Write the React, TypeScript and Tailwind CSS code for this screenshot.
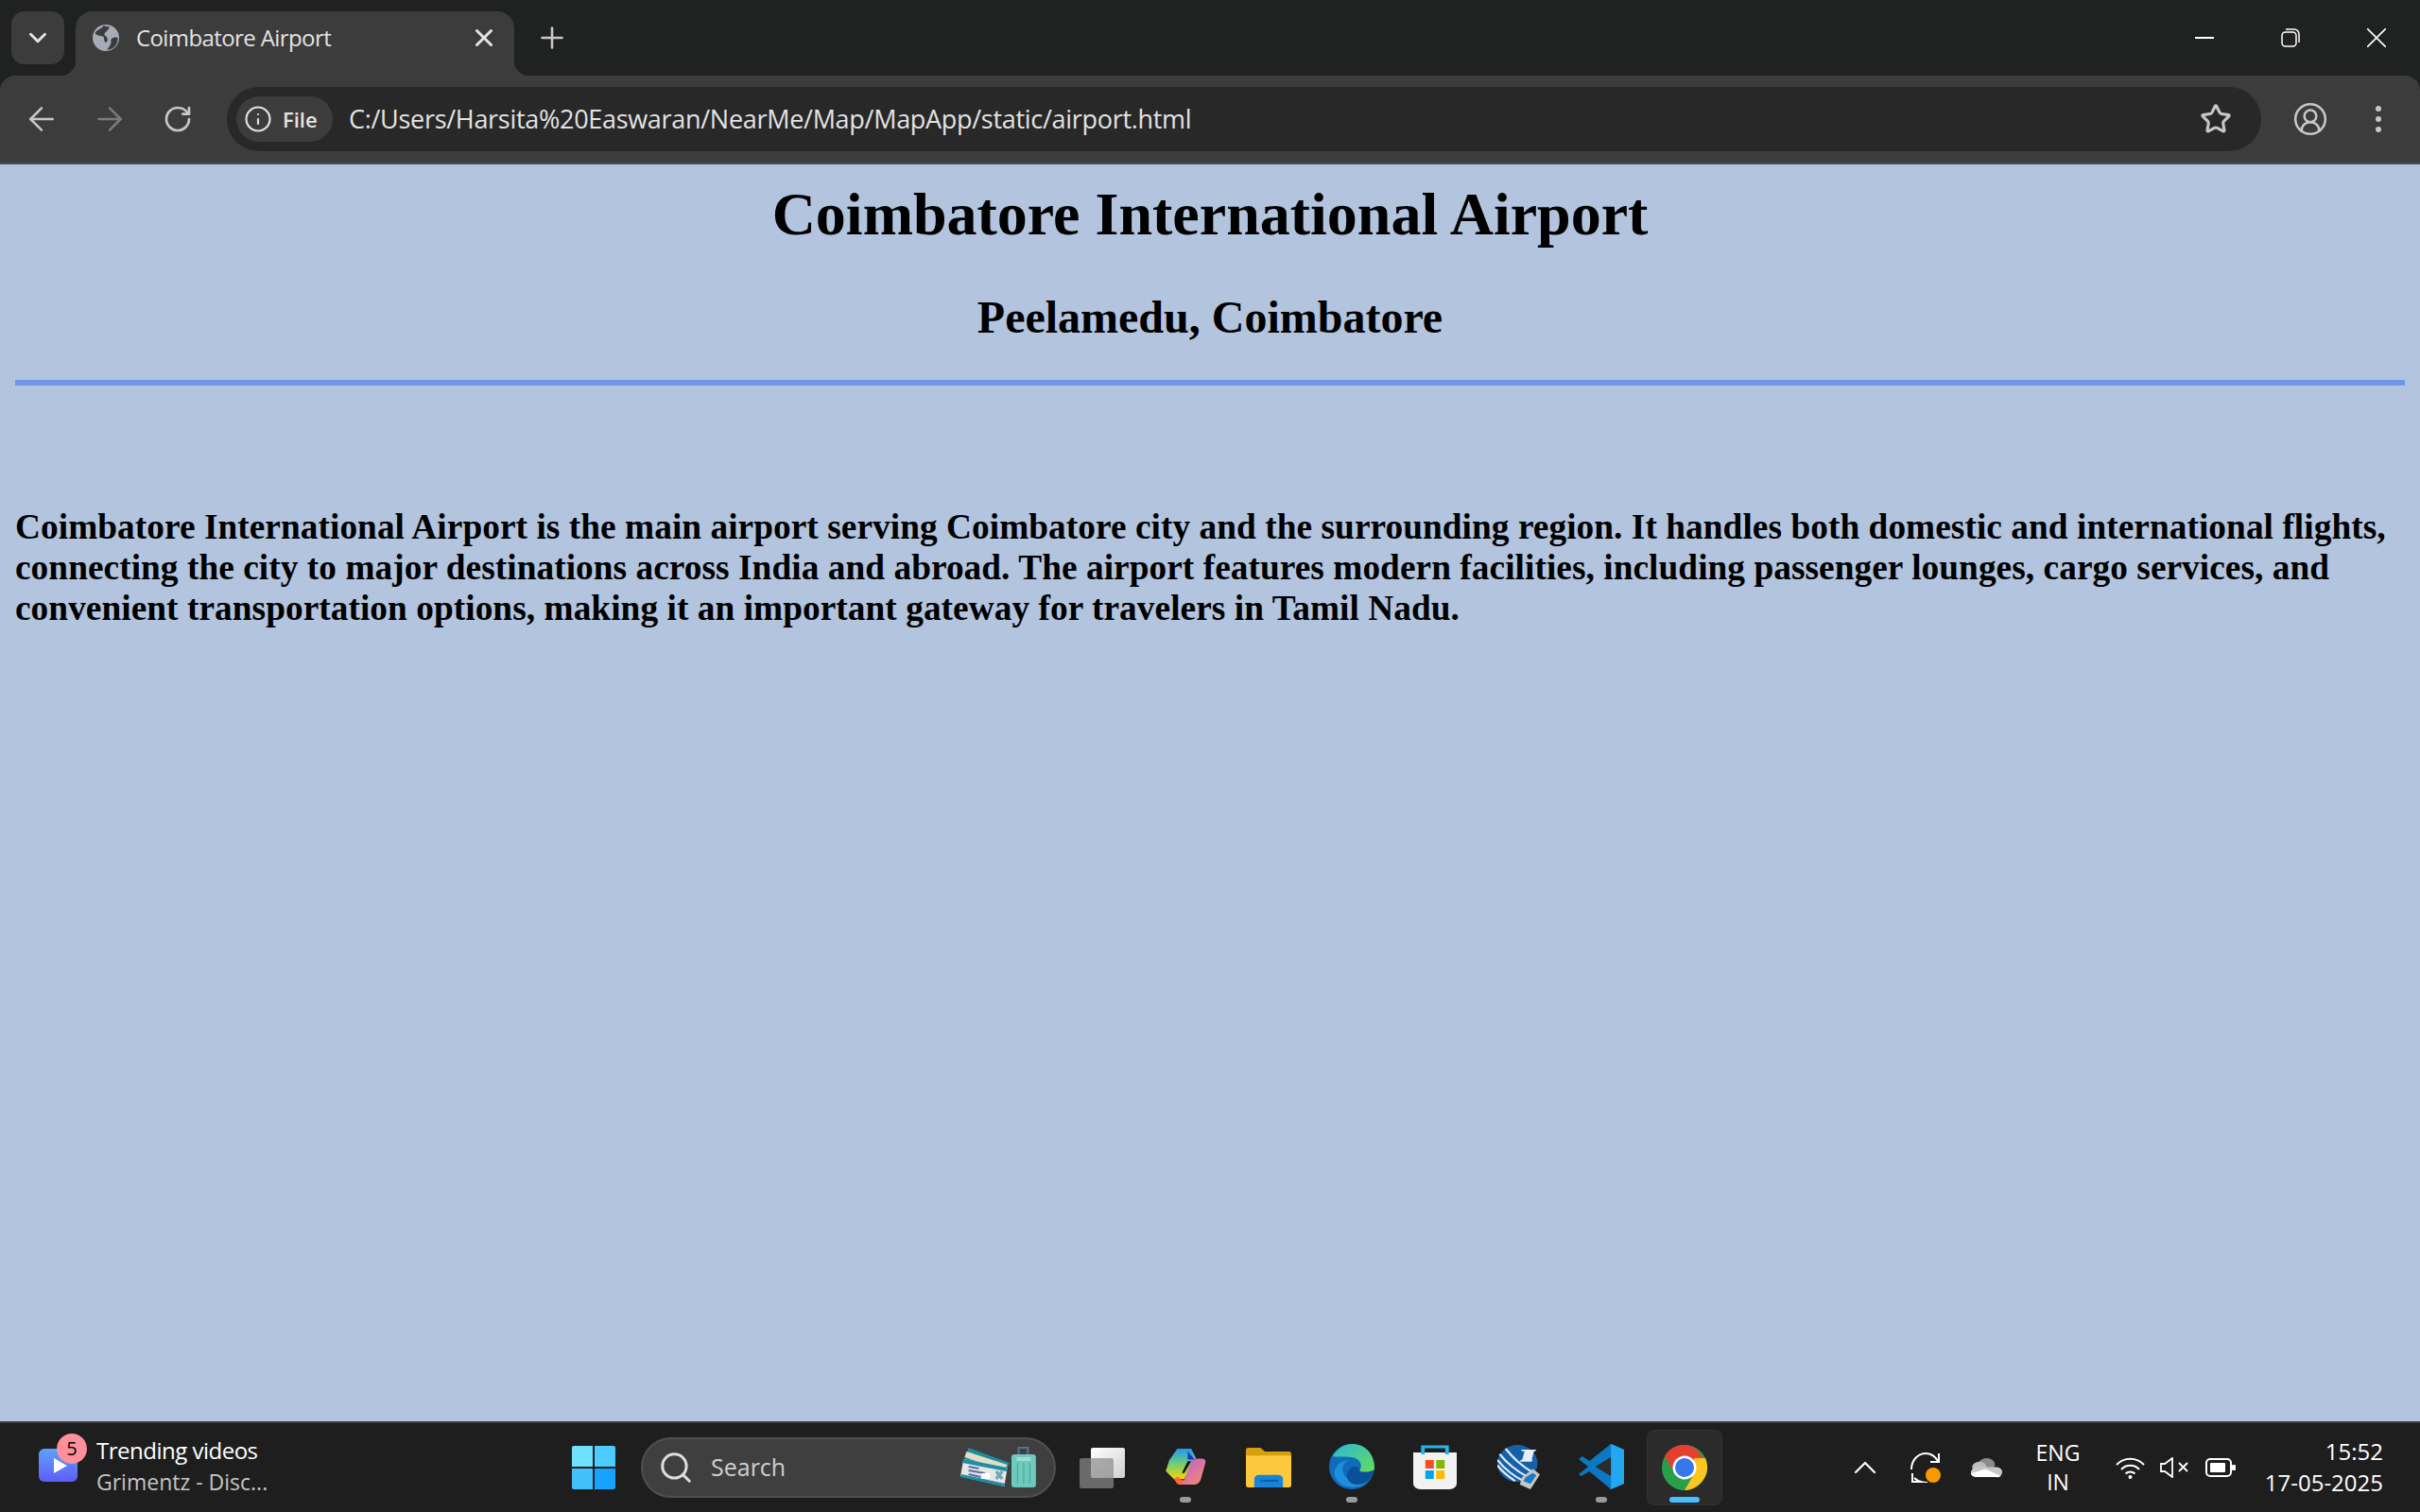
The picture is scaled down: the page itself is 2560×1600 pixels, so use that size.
import type { ReactNode } from "react";
import { ChevronDown, X, Plus, ArrowLeft, ArrowRight, RotateCw, Info, Star, CircleUserRound, Search, ChevronUp } from "lucide-react";

const SANS = "font-['Open_Sans','Noto_Sans',sans-serif]";

function Globe() {
  return (
    <svg width="28" height="28" viewBox="0 0 22 22">
      <circle cx="11" cy="11" r="11" fill="#a6acb5" />
      <path d="M9 1C7 4 4 4 2 7c2 3 5 2 7 3 1 2 0 4 2 5 3-2 1-5-1-6-1-3 3-3 4-7z" fill="#3c3c3c" />
      <path d="M21 11c-3-1-5 0-6 2 1 3-1 5-3 8 5 0 9-4 9-10z" fill="#3c3c3c" />
    </svg>
  );
}

function WinLogo() {
  return (
    <div className="grid h-[46px] w-[46px] grid-cols-2 gap-[2px]">
      <div className="rounded-tl-[2px] bg-[#6fe0ff]" />
      <div className="rounded-tr-[2px] bg-[#4ecbff]" />
      <div className="rounded-bl-[2px] bg-[#41c0fb]" />
      <div className="rounded-br-[2px] bg-[#17a3fd]" />
    </div>
  );
}

function Tickets() {
  return (
    <svg width="82" height="46" viewBox="0 0 76 46" preserveAspectRatio="none">
      <path d="M8 2l40 16-4 10L4 14z" fill="#1c8e9e" />
      <path d="M6 6l40 14-3 6L4 12z" fill="#e5dcc8" />
      <path d="M3 14l43 9-3 20L0 32z" fill="#e8e6e3" />
      <path d="M3 14l43 9-1 4L2 18zM1 30l43 10-1 3L0 33z" fill="#1c8fa7" />
      <path d="M8 22l10 2M8 26l16 3M8 30l12 3" stroke="#5a6ca5" strokeWidth="2" />
      <path d="M35 27l6 8M41 27l-6 8" stroke="#6aa8b8" strokeWidth="3" />
      <rect x="21" y="29" width="8" height="6" fill="#fff" />
      <path d="M57 10V2h9v8" stroke="#56709a" strokeWidth="2" fill="none" />
      <rect x="50" y="9" width="24" height="35" rx="3" fill="#6ecabc" />
      <rect x="55" y="12" width="14" height="4" rx="1" fill="#9fdcd2" />
      <path d="M56 18v22M62 18v22M68 18v22" stroke="#4ba99c" strokeWidth="1" />
    </svg>
  );
}

function TaskView() {
  return (
    <div className="relative h-[43px] w-[48px]">
      <div className="absolute top-0 right-0 h-[32px] w-[36px] rounded-[2px] bg-gradient-to-br from-white to-[#d0d0d0]" />
      <div className="absolute bottom-0 left-0 h-[32px] w-[36px] rounded-[2px] bg-[#8a8a8a]/70" />
    </div>
  );
}

function Copilot() {
  return (
    <svg width="44" height="40" viewBox="0 0 36 42" preserveAspectRatio="none">
      <defs>
        <linearGradient id="cpa" x1="0" y1="0" x2="0" y2="1">
          <stop offset="0" stopColor="#1f9cf0" />
          <stop offset="0.55" stopColor="#7ccf6a" />
          <stop offset="1" stopColor="#ffd400" />
        </linearGradient>
        <linearGradient id="cpb" x1="0" y1="0" x2="1" y2="1">
          <stop offset="0" stopColor="#b05ce0" />
          <stop offset="1" stopColor="#ff8a6a" />
        </linearGradient>
      </defs>
      <path d="M11 1h12l4 10-10 24H8l-7-9 3-12z" fill="url(#cpa)" />
      <path d="M24 12h8c3 0 4 2 3 6l-3 14c-1 6-3 9-7 9H12l-1-5h6z" fill="url(#cpb)" />
      <path d="M20 4l6 9h-6z" fill="#1238c8" />
      <path d="M8 34c2 5 3 7 6 7h3l-5-9z" fill="#ff6a3d" />
      <path d="M15 28l5-13h3l-6 13z" fill="#101010" />
    </svg>
  );
}

function Folder() {
  return (
    <svg width="48" height="43" viewBox="0 0 38 42" preserveAspectRatio="none">
      <path d="M0 3a2 2 0 012-2h10l4 4h20a2 2 0 012 2v6H0z" fill="#d89f0c" />
      <path d="M0 9h36a2 2 0 012 2v29a2 2 0 01-2 2H2a2 2 0 01-2-2z" fill="#fcc83d" />
      <path d="M7 42v-9a4 4 0 014-4h16a4 4 0 014 4v9z" fill="#1684d8" />
      <rect x="12" y="34" width="15" height="2" fill="#0b5ea3" />
    </svg>
  );
}

function Edge() {
  return (
    <svg width="48" height="48" viewBox="0 0 38 48" preserveAspectRatio="none">
      <defs>
        <linearGradient id="eda" x1="0" y1="0" x2="1" y2="1">
          <stop offset="0" stopColor="#2bb8d8" />
          <stop offset="1" stopColor="#66dd55" />
        </linearGradient>
      </defs>
      <ellipse cx="19" cy="24" rx="19" ry="24" fill="#0f6cbd" />
      <path d="M3 13C8 3 14 0 19 0c11 0 19 10 19 26 0 5-9 6-13 3 4-6 1-14-6-15C11 13 6 14 3 13z" fill="url(#eda)" />
      <path d="M18 17c-6 1-8 8-6 14 2 7 10 12 20 10-8 7-22 7-27-6C3 26 8 17 18 17z" fill="#1e8fdc" />
      <path d="M17 27c3-5 8-3 9 2 4 1 8 1 12-2-2 10-8 17-16 16-7-2-9-10-5-16z" fill="#0b4f96" />
    </svg>
  );
}

function Store() {
  return (
    <svg width="46" height="48" viewBox="0 0 36 48" preserveAspectRatio="none">
      <path d="M0 9h36v33a6 6 0 01-6 6H6a6 6 0 01-6-6z" fill="#f2f2f2" />
      <path d="M8 11V3h20v8" stroke="#25b3ea" strokeWidth="3" fill="none" />
      <rect x="10" y="17" width="7" height="9" fill="#f25022" />
      <rect x="19" y="17" width="7" height="9" fill="#7fba00" />
      <rect x="10" y="28" width="7" height="9" fill="#00a4ef" />
      <rect x="19" y="28" width="7" height="9" fill="#ffb900" />
    </svg>
  );
}

function Globe3d() {
  return (
    <svg width="45" height="47" viewBox="0 0 36 48" preserveAspectRatio="none">
      <ellipse cx="17" cy="20" rx="17" ry="20" fill="#1560a8" />
      <path d="M2 10c6 10 14 18 24 25M0 16c6 10 13 17 22 23M0 22c4 7 9 12 15 17M7 4c6 10 13 18 23 26" stroke="#dfeaf5" strokeWidth="2" fill="none" />
      <path d="M20 5h13l-1 2h-1l-2 9h1l-1 2H19l1-2h1l2-9h-2z" fill="#e8eef5" />
      <path d="M21 35l9-9 6 6-8 16-9-5z" fill="#c7c7c7" />
      <path d="M24 35l6-5 3 3-5 9-6-3z" fill="#1a7cc0" />
    </svg>
  );
}

function VsCode() {
  return (
    <svg width="48" height="48" viewBox="0 0 38 48" preserveAspectRatio="none">
      <path d="M27 0l11 6v36l-11 6-18-19-7 5-2-2 8-8-8-8 3-3 6 5z" fill="#0a78c2" />
      <path d="M27 0l11 6v36l-11 6z" fill="#23a7f0" />
      <path d="M27 14L14 24l13 10z" fill="#2a2a2a" />
    </svg>
  );
}

function Chrome() {
  return (
    <svg width="48" height="48" viewBox="0 0 48 48">
      <circle cx="24" cy="24" r="24" fill="#28a04a" />
      <path d="M24 0C15 0 7 5 3 12l11 19 10-7h22C44 10 35 0 24 0z" fill="#e3402f" />
      <path d="M46 14c3 7 3 14-1 21-4 7-12 13-21 13l11-19-1-15z" fill="#fcc51f" />
      <circle cx="24" cy="24" r="12.5" fill="#fff" />
      <circle cx="24" cy="24" r="10" fill="#3478ea" />
    </svg>
  );
}

function OneDrive() {
  return (
    <svg width="33" height="21" viewBox="0 0 26 22" preserveAspectRatio="none">
      <circle cx="13" cy="7" r="7" fill="#8a8a8a" />
      <circle cx="7" cy="10" r="6" fill="#bdbdbd" />
      <path d="M0 17a6 6 0 015-7h16a5 5 0 015 5v1a5 5 0 01-5 5H5a5 5 0 01-5-4z" fill="#c8c8c8" />
      <path d="M0 17l12-5 13 8a4 4 0 01-4 1H5a5 5 0 01-5-4z" fill="#fff" />
    </svg>
  );
}

function Sync() {
  return (
    <svg width="32" height="32" viewBox="0 0 32 32" fill="none" stroke="#fff" strokeWidth="2">
      <path d="M1 18C1 8 8 1 16 1c6 0 10 3 13 8" />
      <path d="M30 1v9h-9" />
      <path d="M4 27q5 5 14 5" />
      <path d="M2 22v9h9" />
      <circle cx="24" cy="24" r="8" fill="#f59b00" stroke="none" />
    </svg>
  );
}

function WifiIcon() {
  return (
    <svg width="33" height="23" viewBox="0 0 33 23" fill="none" stroke="#fff" strokeWidth="2">
      <path d="M2 8A20 20 0 0131 8" />
      <path d="M7 13a13 13 0 0119 0" />
      <path d="M11.5 17.5a7 7 0 0110 0" />
      <circle cx="16.5" cy="21" r="2" fill="#fff" stroke="none" />
    </svg>
  );
}

function Speaker() {
  return (
    <svg width="30" height="22" viewBox="0 0 30 22" fill="none" stroke="#fff" strokeWidth="1.8">
      <path d="M1 7h4l8-6v20l-8-6H1z" />
      <path d="M20 6l9 9M29 6l-9 9" />
    </svg>
  );
}

function Battery() {
  return (
    <svg width="32" height="20" viewBox="0 0 32 20">
      <rect x="1" y="1" width="26" height="18" rx="4" fill="none" stroke="#fff" strokeWidth="2" />
      <rect x="5" y="5" width="16" height="10" rx="1" fill="#fff" />
      <rect x="28" y="7" width="4" height="6" rx="1" fill="#fff" />
    </svg>
  );
}

function TaskbarApp({ children, dot }: { children: ReactNode; dot?: boolean }) {
  return (
    <div className="relative flex h-[94px] w-[88px] items-center justify-center pb-[2px]">
      {children}
      {dot && <div className="absolute bottom-[10px] h-[6px] w-[12px] rounded-full bg-[#9a9a9a]" />}
    </div>
  );
}

export default function App() {
  return (
    <div className="flex h-[1600px] w-[2560px] flex-col overflow-hidden bg-[#b2c4de]">
      {/* browser chrome */}
      <div className={`bg-[#202222] ${SANS}`}>
        <div className="relative flex h-[80px] items-start pl-[12px]">
          <div className="mt-[12px] flex h-[56px] w-[56px] items-center justify-center rounded-[14px] bg-[#3c3c3c] text-[#e4e4e4]">
            <ChevronDown size={30} strokeWidth={2.4} />
          </div>
          <div className="relative mt-[12px] ml-[12px] h-[68px] w-[464px] rounded-t-[18px] bg-[#3c3c3c] pr-[17px] pl-[18px]">
            <div className="absolute bottom-0 -left-[16px] h-[16px] w-[16px] bg-[radial-gradient(circle_at_0_0,#202222_16px,#3c3c3c_16.5px)]" />
            <div className="absolute -right-[16px] bottom-0 h-[16px] w-[16px] bg-[radial-gradient(circle_at_100%_0,#202222_16px,#3c3c3c_16.5px)]" />
            <div className="flex h-[56px] items-center">
              <Globe />
              <span className="ml-[18px] text-[24px] tracking-[-0.6px] text-[#e3e3e3]">Coimbatore Airport</span>
              <X size={30} strokeWidth={2.4} className="ml-auto text-[#e4e4e4]" />
            </div>
          </div>
          <Plus size={36} strokeWidth={1.7} className="mt-[22px] ml-[22px] text-[#c7c7c7]" />
          <div className="ml-auto flex h-[80px] items-center gap-[71px] pr-[36px]">
            <div className="h-[2px] w-[20px] bg-white" />
            <svg width="20" height="20" viewBox="0 0 20 20">
              <rect x="1" y="4" width="15" height="15" rx="3.5" fill="none" stroke="#fff" strokeWidth="1.5" />
              <path d="M5 1h9a5 5 0 015 5v9" fill="none" stroke="#fff" strokeWidth="1.5" />
            </svg>
            <svg width="20" height="20" viewBox="0 0 20 20">
              <path d="M0 0l20 20M20 0L0 20" stroke="#fff" strokeWidth="1.6" />
            </svg>
          </div>
        </div>
        <div className="flex h-[94px] items-center rounded-t-[16px] border-b-[2px] border-[#4a4a4a] bg-[#3c3c3c] pl-[8px]">
          <div className="flex w-[72px] justify-center">
            <ArrowLeft size={40} strokeWidth={1.5} className="text-[#c7c7c7]" />
          </div>
          <div className="flex w-[72px] justify-center">
            <ArrowRight size={40} strokeWidth={1.5} className="text-[#7b7b7b]" />
          </div>
          <div className="flex w-[72px] justify-center">
            <RotateCw size={32} strokeWidth={2} className="text-[#c7c7c7]" />
          </div>
          <div className="ml-[16px] flex h-[68px] w-[2152px] items-center rounded-full bg-[#282828] pr-[31px] pl-[10px]">
            <div className="flex h-[48px] w-[102px] items-center rounded-full bg-[#3c3c3c] pl-[8px]">
              <Info size={30} strokeWidth={1.7} className="text-[#e3e3e3]" />
              <span className="ml-[11px] text-[22px] font-semibold text-[#e3e3e3]">File</span>
            </div>
            <span className="ml-[17px] text-[27px] tracking-[-0.3px] text-[#e3e3e3]">C:/Users/Harsita%20Easwaran/NearMe/Map/MapApp/static/airport.html</span>
            <Star size={34} strokeWidth={2.2} className="ml-auto text-[#c7c7c7]" />
          </div>
          <CircleUserRound size={38} strokeWidth={1.6} className="ml-[33px] text-[#c7c7c7]" />
          <svg width="8" height="32" viewBox="0 0 8 32" className="ml-[49px]">
            <circle cx="4" cy="5" r="3" fill="#c7c7c7" />
            <circle cx="4" cy="16" r="3" fill="#c7c7c7" />
            <circle cx="4" cy="27" r="3" fill="#c7c7c7" />
          </svg>
        </div>
      </div>

      {/* page */}
      <div className="min-h-0 flex-1 px-[16px] font-['Liberation_Serif',serif] font-bold text-black">
        <h1 className="mt-[16px] text-center text-[64px] leading-[74px]">Coimbatore International Airport</h1>
        <h2 className="mt-[44px] text-center text-[48px] leading-[55px]">Peelamedu, Coimbatore</h2>
        <hr className="mt-[39px] h-[6px] border-0 bg-[#7096ec]" />
        <p className="mt-[128px] text-[37.3px] leading-[43px] tracking-[0.06px]">
          Coimbatore International Airport is the main airport serving Coimbatore city and the surrounding region. It handles both domestic and international flights, connecting the city to major destinations across India and abroad. The airport features modern facilities, including passenger lounges, cargo services, and convenient transportation options, making it an important gateway for travelers in Tamil Nadu.
        </p>
      </div>

      {/* taskbar */}
      <div className={`flex h-[96px] items-center border-t-[2px] border-[#3f3f3f] bg-[#1e1e1e] ${SANS}`}>
        <div className="flex w-[605px] items-center pl-[41px]">
          <div className="relative mb-[6px] h-[35px] w-[41px] rounded-[6px] bg-gradient-to-b from-[#5fa0fb] to-[#5e5cf8]">
            <div className="absolute top-[10px] left-[16px] h-0 w-0 border-y-[8px] border-l-[14px] border-y-transparent border-l-white" />
            <div className="absolute -top-[16px] left-[19px] flex h-[32px] w-[32px] items-center justify-center rounded-full bg-[#ff8f9c] text-[20px] text-black">5</div>
          </div>
          <div className="mb-[3px] ml-[20px] flex flex-col">
            <span className="mb-[1px] text-[24px] leading-[32px] tracking-[-0.5px] text-white">Trending videos</span>
            <span className="text-[23px] leading-[32px] text-[#c4c4c4]">Grimentz - Disc...</span>
          </div>
        </div>

        <WinLogo />
        <div className="ml-[27px] flex h-[64px] w-[439px] items-center rounded-full border-[2px] border-[#505050] bg-[#3f3f3f] pr-[17px] pl-[16px]">
          <Search size={38} strokeWidth={1.9} className="text-[#dedede]" />
          <span className="ml-[18px] text-[25px] text-[#cfcfcf]">Search</span>
          <div className="ml-auto">
            <Tickets />
          </div>
        </div>
        <div className="ml-[5px] flex w-[88px] justify-center">
          <TaskView />
        </div>
        <TaskbarApp dot><Copilot /></TaskbarApp>
        <TaskbarApp><Folder /></TaskbarApp>
        <TaskbarApp dot><Edge /></TaskbarApp>
        <TaskbarApp><Store /></TaskbarApp>
        <TaskbarApp><Globe3d /></TaskbarApp>
        <TaskbarApp dot><VsCode /></TaskbarApp>
        <div className="flex w-[88px] justify-center">
          <div className="relative flex h-[80px] w-[80px] items-center justify-center rounded-[8px] border border-[#333] bg-[#2b2b2b]">
            <Chrome />
            <div className="absolute bottom-[2px] h-[6px] w-[32px] rounded-full bg-[#47bfff]" />
          </div>
        </div>

        <ChevronUp size={40} strokeWidth={1.3} className="ml-[127px] text-white" />
        <div className="ml-[28px]"><Sync /></div>
        <div className="ml-[32px]"><OneDrive /></div>
        <div className="ml-[29px] flex w-[60px] flex-col items-center text-[23px] leading-[31px] text-white">
          <span>ENG</span>
          <span>IN</span>
        </div>
        <div className="ml-[30px]"><WifiIcon /></div>
        <div className="ml-[15px]"><Speaker /></div>
        <div className="ml-[18px]"><Battery /></div>
        <div className="mr-[39px] mb-[3px] ml-auto flex flex-col items-end text-[24px] leading-[33px] text-white">
          <span>15:52</span>
          <span>17-05-2025</span>
        </div>
      </div>
    </div>
  );
}
